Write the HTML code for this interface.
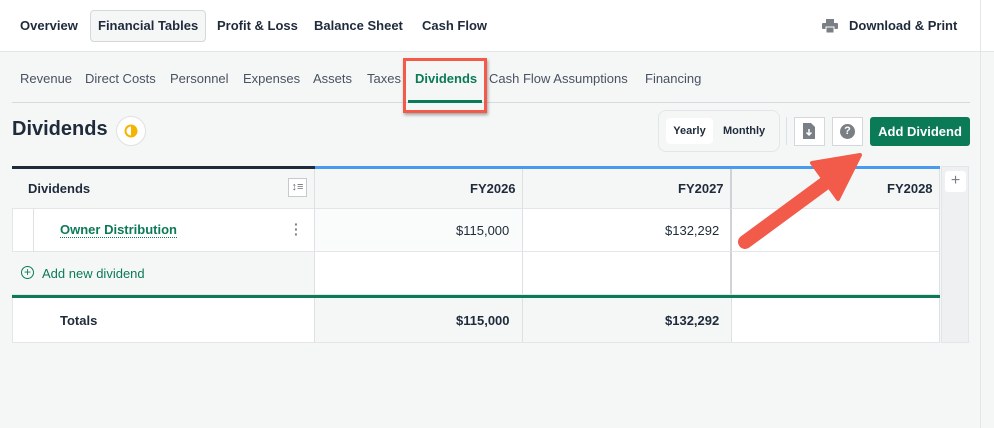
<!DOCTYPE html>
<html><head><style>
*{box-sizing:border-box;margin:0;padding:0}
body{width:994px;height:428px;overflow:hidden;background:#f5f7f7;font-family:"Liberation Sans",sans-serif;color:#1f2a3a;position:relative}
.abs{position:absolute}
.top{left:0;top:0;width:994px;height:52px;background:#fff;border-bottom:1px solid #e3e6e8}
.tn{position:absolute;top:18px;font-size:13px;font-weight:bold;color:#1f2a3a}
.sn{position:absolute;top:71px;font-size:13px;color:#4a5260}
.cell{position:absolute;border-right:1px solid #dde1e4;border-bottom:1px solid #e3e6e8}
</style></head><body>
<div class="abs top"></div>
<div class="abs" style="left:980px;top:0;width:1px;height:428px;background:#e3e6e8"></div>
<div class="tn" style="left:20px">Overview</div>
<div class="abs" style="left:90px;top:10px;width:116px;height:32px;border:1px solid #d4d8dc;border-radius:4px;background:#f5f7f7"></div>
<div class="tn" style="left:98px">Financial Tables</div>
<div class="tn" style="left:217px">Profit &amp; Loss</div>
<div class="tn" style="left:314px">Balance Sheet</div>
<div class="tn" style="left:422px">Cash Flow</div>
<svg class="abs" style="left:822px;top:19px" width="16" height="14" viewBox="0 0 16 14"><rect x="4" y="0" width="8" height="4" fill="#7a7f86"/><rect x="0" y="4" width="16" height="6" rx="1" fill="#7a7f86"/><rect x="4" y="8" width="8" height="6" fill="#7a7f86" stroke="#fff" stroke-width="1"/></svg>
<div class="tn" style="left:849px">Download &amp; Print</div>

<div class="sn" style="left:20px">Revenue</div>
<div class="sn" style="left:85px">Direct Costs</div>
<div class="sn" style="left:170px">Personnel</div>
<div class="sn" style="left:243px">Expenses</div>
<div class="sn" style="left:313px">Assets</div>
<div class="sn" style="left:367px">Taxes</div>
<div class="sn" style="left:415px;color:#0b7a57;font-weight:bold">Dividends</div>
<div class="sn" style="left:489px">Cash Flow Assumptions</div>
<div class="sn" style="left:645px">Financing</div>
<div class="abs" style="left:12px;top:102px;width:958px;height:1px;background:#d6dadd"></div>
<div class="abs" style="left:408px;top:100px;width:74px;height:3px;background:#0b7a57"></div>
<div class="abs" style="left:403px;top:58px;width:84px;height:55px;border:3px solid #f25a4a;box-shadow:1px 2px 3px rgba(0,0,0,.35)"></div>

<div class="abs" style="left:12px;top:118px;font-size:20px;font-weight:bold">Dividends</div>
<div class="abs" style="left:116px;top:116px;width:30px;height:30px;border:1px solid #dde1e4;border-radius:50%;background:#fff"></div>
<svg class="abs" style="left:124px;top:124px" width="14" height="14"><circle cx="7" cy="7" r="5.5" fill="none" stroke="#f5b400" stroke-width="2"/><path d="M7 1.5A5.5 5.5 0 0 1 7 12.5Z" fill="#f5b400"/></svg>

<div class="abs" style="left:658px;top:110px;width:122px;height:42px;border:1px solid #e3e6e8;border-radius:8px"></div>
<div class="abs" style="left:666px;top:118px;width:47px;height:26px;background:#fff;border-radius:4px;font-size:11px;font-weight:bold;text-align:center;line-height:26px">Yearly</div>
<div class="abs" style="left:723px;top:118px;font-size:11px;font-weight:bold;line-height:26px">Monthly</div>
<div class="abs" style="left:786px;top:117px;width:1px;height:28px;background:#dde1e4"></div>
<div class="abs" style="left:794px;top:117px;width:31px;height:29px;border:1px solid #d4d8dc;background:#fff"></div>
<svg class="abs" style="left:803px;top:123px" width="12" height="16"><path d="M0 0H8L12 4V16H0Z" fill="#7a7f86"/><path d="M6 6V12M3.5 9.5L6 12L8.5 9.5" stroke="#fff" stroke-width="1.5" fill="none"/></svg>
<div class="abs" style="left:832px;top:117px;width:31px;height:29px;border:1px solid #d4d8dc;background:#fff"></div>
<div class="abs" style="left:840px;top:124px;width:15px;height:15px;border-radius:50%;background:#7a7f86;color:#fff;font-size:11px;font-weight:bold;text-align:center;line-height:15px">?</div>
<div class="abs" style="left:870px;top:117px;width:100px;height:29px;background:#0b7a57;border-radius:3px;color:#fff;font-size:13px;font-weight:bold;text-align:center;line-height:29px">Add Dividend</div>

<!-- table -->
<div class="abs" style="left:12px;top:166px;width:928px;height:177px;background:#fff;border:1px solid #e3e6e8"></div>
<div class="abs" style="left:12px;top:166px;width:303px;height:3px;background:#1f2a3a"></div>
<div class="abs" style="left:315px;top:166px;width:625px;height:3px;background:#4a9af0"></div>
<div class="abs" style="left:315px;top:166px;width:51px;height:13px;background:#4a9af0;color:#fff;font-size:8px;line-height:13px;padding-left:2px">Forecast →</div>
<div class="cell" style="left:12px;top:169px;width:303px;height:40px;background:#f5f7f7"></div>
<div class="cell" style="left:315px;top:169px;width:208px;height:40px;background:#f5f7f7"></div>
<div class="cell" style="left:523px;top:169px;width:209px;height:40px;background:#f5f7f7;border-right:2px solid #cfd3d6"></div>
<div class="cell" style="left:732px;top:169px;width:208px;height:40px;background:#f5f7f7"></div>
<div class="abs" style="left:28px;top:181px;font-size:13px;font-weight:bold">Dividends</div>
<div class="abs" style="left:288px;top:178px;width:19px;height:19px;border:1px solid #c5cacd;background:#fff;font-size:11px;color:#6b7079;text-align:center;line-height:17px">↕≡</div>
<div class="abs" style="left:470px;top:181px;font-size:13px;font-weight:bold">FY2026</div>
<div class="abs" style="left:678px;top:181px;font-size:13px;font-weight:bold">FY2027</div>
<div class="abs" style="left:887px;top:181px;font-size:13px;font-weight:bold">FY2028</div>

<div class="cell" style="left:12px;top:209px;width:303px;height:43px"></div>
<div class="abs" style="left:33px;top:209px;width:1px;height:43px;background:#dde1e4"></div>
<div class="abs" style="left:60px;top:223px;font-size:13px;font-weight:bold;color:#0b7a57;border-bottom:1px dotted #0b7a57;line-height:14px">Owner Distribution</div>
<div class="abs" style="left:294px;top:222px;font-size:14px;font-weight:bold;color:#7a7f86;line-height:5px;width:4px">·<br>·<br>·</div>
<div class="cell" style="left:315px;top:209px;width:208px;height:43px;background:#fafbfb"></div>
<div class="cell" style="left:523px;top:209px;width:209px;height:43px;border-right:2px solid #cfd3d6"></div>
<div class="cell" style="left:732px;top:209px;width:208px;height:43px"></div>
<div class="abs" style="left:456px;top:223px;font-size:13px">$115,000</div>
<div class="abs" style="left:665px;top:223px;font-size:13px">$132,292</div>

<div class="cell" style="left:12px;top:252px;width:303px;height:43px;background:#f5f7f7"></div>
<div class="cell" style="left:315px;top:252px;width:208px;height:43px"></div>
<div class="cell" style="left:523px;top:252px;width:209px;height:43px;border-right:2px solid #cfd3d6"></div>
<div class="cell" style="left:732px;top:252px;width:208px;height:43px"></div>
<div class="abs" style="left:21px;top:266px;width:13px;height:13px;border:1.5px solid #0b7a57;border-radius:50%;color:#0b7a57;font-size:12px;text-align:center;line-height:10px">+</div>
<div class="abs" style="left:42px;top:266px;font-size:13px;color:#0b7a57">Add new dividend</div>
<div class="abs" style="left:12px;top:295px;width:928px;height:3px;background:#0b7a57"></div>
<div class="cell" style="left:12px;top:298px;width:303px;height:45px"></div>
<div class="cell" style="left:315px;top:298px;width:208px;height:45px;background:#f5f7f7"></div>
<div class="cell" style="left:523px;top:298px;width:209px;height:45px;background:#f5f7f7"></div>
<div class="cell" style="left:732px;top:298px;width:208px;height:45px"></div>
<div class="abs" style="left:60px;top:313px;font-size:13px;font-weight:bold">Totals</div>
<div class="abs" style="left:456px;top:313px;font-size:13px;font-weight:bold">$115,000</div>
<div class="abs" style="left:665px;top:313px;font-size:13px;font-weight:bold">$132,292</div>
<div class="abs" style="left:941px;top:166px;width:28px;height:177px;background:#eef0f1;border:1px solid #e3e6e8"></div>
<div class="abs" style="left:945px;top:171px;width:21px;height:21px;background:#fff;border-radius:3px;color:#7a7f86;text-align:center;line-height:20px;font-size:16px">+</div>

<svg class="abs" style="left:0;top:0" width="994" height="428"><g fill="#f25a4a" stroke="#f25a4a" stroke-linejoin="round" stroke-linecap="round"><line x1="745" y1="242" x2="828" y2="181" stroke-width="14"/><path d="M812 163L860 155L838 199Z" stroke-width="4"/></g></svg>
</body></html>
